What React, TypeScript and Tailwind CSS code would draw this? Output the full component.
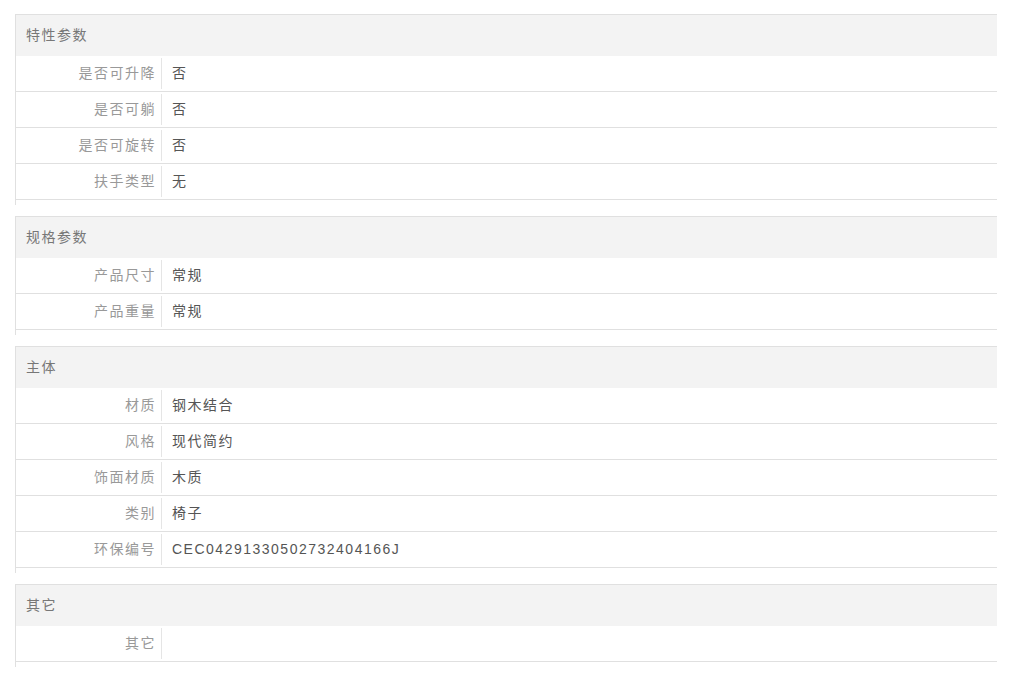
const sections: { title: string; rows: [string, string][] }[] = [
  {
    title: "特性参数",
    rows: [
      ["是否可升降", "否"],
      ["是否可躺", "否"],
      ["是否可旋转", "否"],
      ["扶手类型", "无"],
    ],
  },
  {
    title: "规格参数",
    rows: [
      ["产品尺寸", "常规"],
      ["产品重量", "常规"],
    ],
  },
  {
    title: "主体",
    rows: [
      ["材质", "钢木结合"],
      ["风格", "现代简约"],
      ["饰面材质", "木质"],
      ["类别", "椅子"],
      ["环保编号", "CEC0429133050273240416​6J".replace("\u200b", "")],
    ],
  },
  {
    title: "其它",
    rows: [["其它", ""]],
  },
];

export default function App() {
  return (
    <div
      className="h-[684px] w-[1024px] overflow-hidden bg-white pl-[15px] pr-[27px] pt-[14px] text-[14px] tracking-[1.5px]"
      style={{ fontFamily: '"Liberation Sans", "Noto Sans CJK SC", sans-serif' }}
    >
      {sections.map((s) => (
        <div key={s.title} className="mb-[11px] border-l border-t border-[#e0e0e0] pb-[5px]">
          <div className="flex h-[41px] items-center bg-[#f3f3f3] pl-[10px] text-[#777]">{s.title}</div>
          {s.rows.map(([k, v]) => (
            <div key={k} className="flex h-[36px] border-b border-[#e0e0e0]">
              <div className="my-[2px] flex w-[146px] items-center justify-end border-r border-[#e5e5e5] pr-[5px] text-[#999]">
                {k}
              </div>
              <div className="flex items-center pl-[10px] text-[#555]">{v}</div>
            </div>
          ))}
        </div>
      ))}
    </div>
  );
}
